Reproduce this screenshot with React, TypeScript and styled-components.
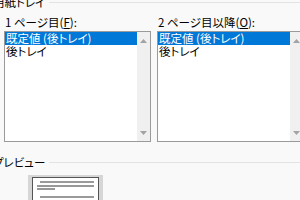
import React from "react";
import styled, { createGlobalStyle } from "styled-components";

const Global = createGlobalStyle`
  html, body {
    margin: 0;
    padding: 0;
    background: #f9f9f9;
  }
  body {
    width: 300px;
    height: 200px;
    overflow: hidden;
    font-family: "Noto Sans CJK JP", "Noto Sans", sans-serif;
    font-size: 11.5px;
    color: #000;
    font-feature-settings: "palt";
  }
`;

const Root = styled.div`
  display: flex;
  flex-direction: column;
  width: 300px;
  height: 200px;
  overflow: hidden;
`;

const GroupHeader = styled.div<{ $top: number }>`
  display: flex;
  align-items: center;
  gap: 4px;
  height: 12px;
  line-height: 12px;
  margin-top: ${(p) => p.$top}px;
  margin-left: -7px;
  white-space: nowrap;
`;

const Rule = styled.div`
  flex: 1;
  height: 1px;
  background: #e3e3e3;
  margin-top: 1px;
`;

const Columns = styled.div`
  display: grid;
  grid-template-columns: 147px 147px;
  column-gap: 6px;
  padding-left: 4px;
  margin-top: 8px;
`;

const Field = styled.div`
  display: flex;
  flex-direction: column;
`;

const Label = styled.div`
  height: 15px;
  line-height: 13px;
  padding-left: 1px;
  white-space: nowrap;
  u {
    text-underline-offset: 1px;
  }
`;

const ListBox = styled.div`
  display: flex;
  height: 111px;
  box-sizing: border-box;
  border: 1px solid #9a9a9a;
  background: #fff;
`;

const Items = styled.div`
  flex: 1;
  display: flex;
  flex-direction: column;
`;

const Item = styled.div<{ $selected?: boolean }>`
  height: 13px;
  line-height: 13px;
  padding-left: 1px;
  white-space: nowrap;
  background: ${(p) => (p.$selected ? "#0078d7" : "transparent")};
  color: ${(p) => (p.$selected ? "#fff" : "#000")};
`;

const ScrollBar = styled.div`
  width: 13px;
  background: #f0f0f0;
  display: flex;
  flex-direction: column;
  justify-content: space-between;
  align-items: center;
  padding: 7px 0 6px;
`;

const Arrow = ({ down }: { down?: boolean }) => (
  <svg width="7" height="4" viewBox="0 0 7 4">
    <path d={down ? "M0 0H7L3.5 4Z" : "M0 4H7L3.5 0Z"} fill="#a3a3a3" />
  </svg>
);

const PreviewFrame = styled.div`
  margin-top: 7px;
  margin-left: 28px;
  width: 75px;
  box-sizing: border-box;
  padding: 2px 4px 0;
  background: #d6d6d6;
  height: 40px;
`;

const PageThumb = () => (
  <svg width="67" height="38" viewBox="0 0 67 38" style={{ display: "block" }}>
    <rect x="0.5" y="0.5" width="66" height="40" fill="#fff" stroke="#555" />
    <rect x="8" y="4" width="54" height="2" fill="#9a9a9a" />
    <rect x="5" y="8.5" width="57" height="1" fill="#333" />
    <rect x="5" y="11.5" width="18" height="1" fill="#333" />
    <rect x="8" y="19" width="54" height="2" fill="#9a9a9a" />
  </svg>
);

const lists = [
  { before: "1 ページ目(", key: "F" },
  { before: "2 ページ目以降(", key: "O" },
];

export default function App() {
  return (
    <Root>
      <Global />
      <GroupHeader $top={-4}>
        用紙トレイ
        <Rule />
      </GroupHeader>
      <Columns>
        {lists.map((l) => (
          <Field key={l.key}>
            <Label>
              {l.before}
              <u>{l.key}</u>):
            </Label>
            <ListBox>
              <Items>
                <Item $selected>既定値 (後トレイ)</Item>
                <Item>後トレイ</Item>
              </Items>
              <ScrollBar>
                <Arrow />
                <Arrow down />
              </ScrollBar>
            </ListBox>
          </Field>
        ))}
      </Columns>
      <GroupHeader $top={14}>
        プレビュー
        <Rule />
      </GroupHeader>
      <PreviewFrame>
        <PageThumb />
      </PreviewFrame>
    </Root>
  );
}
